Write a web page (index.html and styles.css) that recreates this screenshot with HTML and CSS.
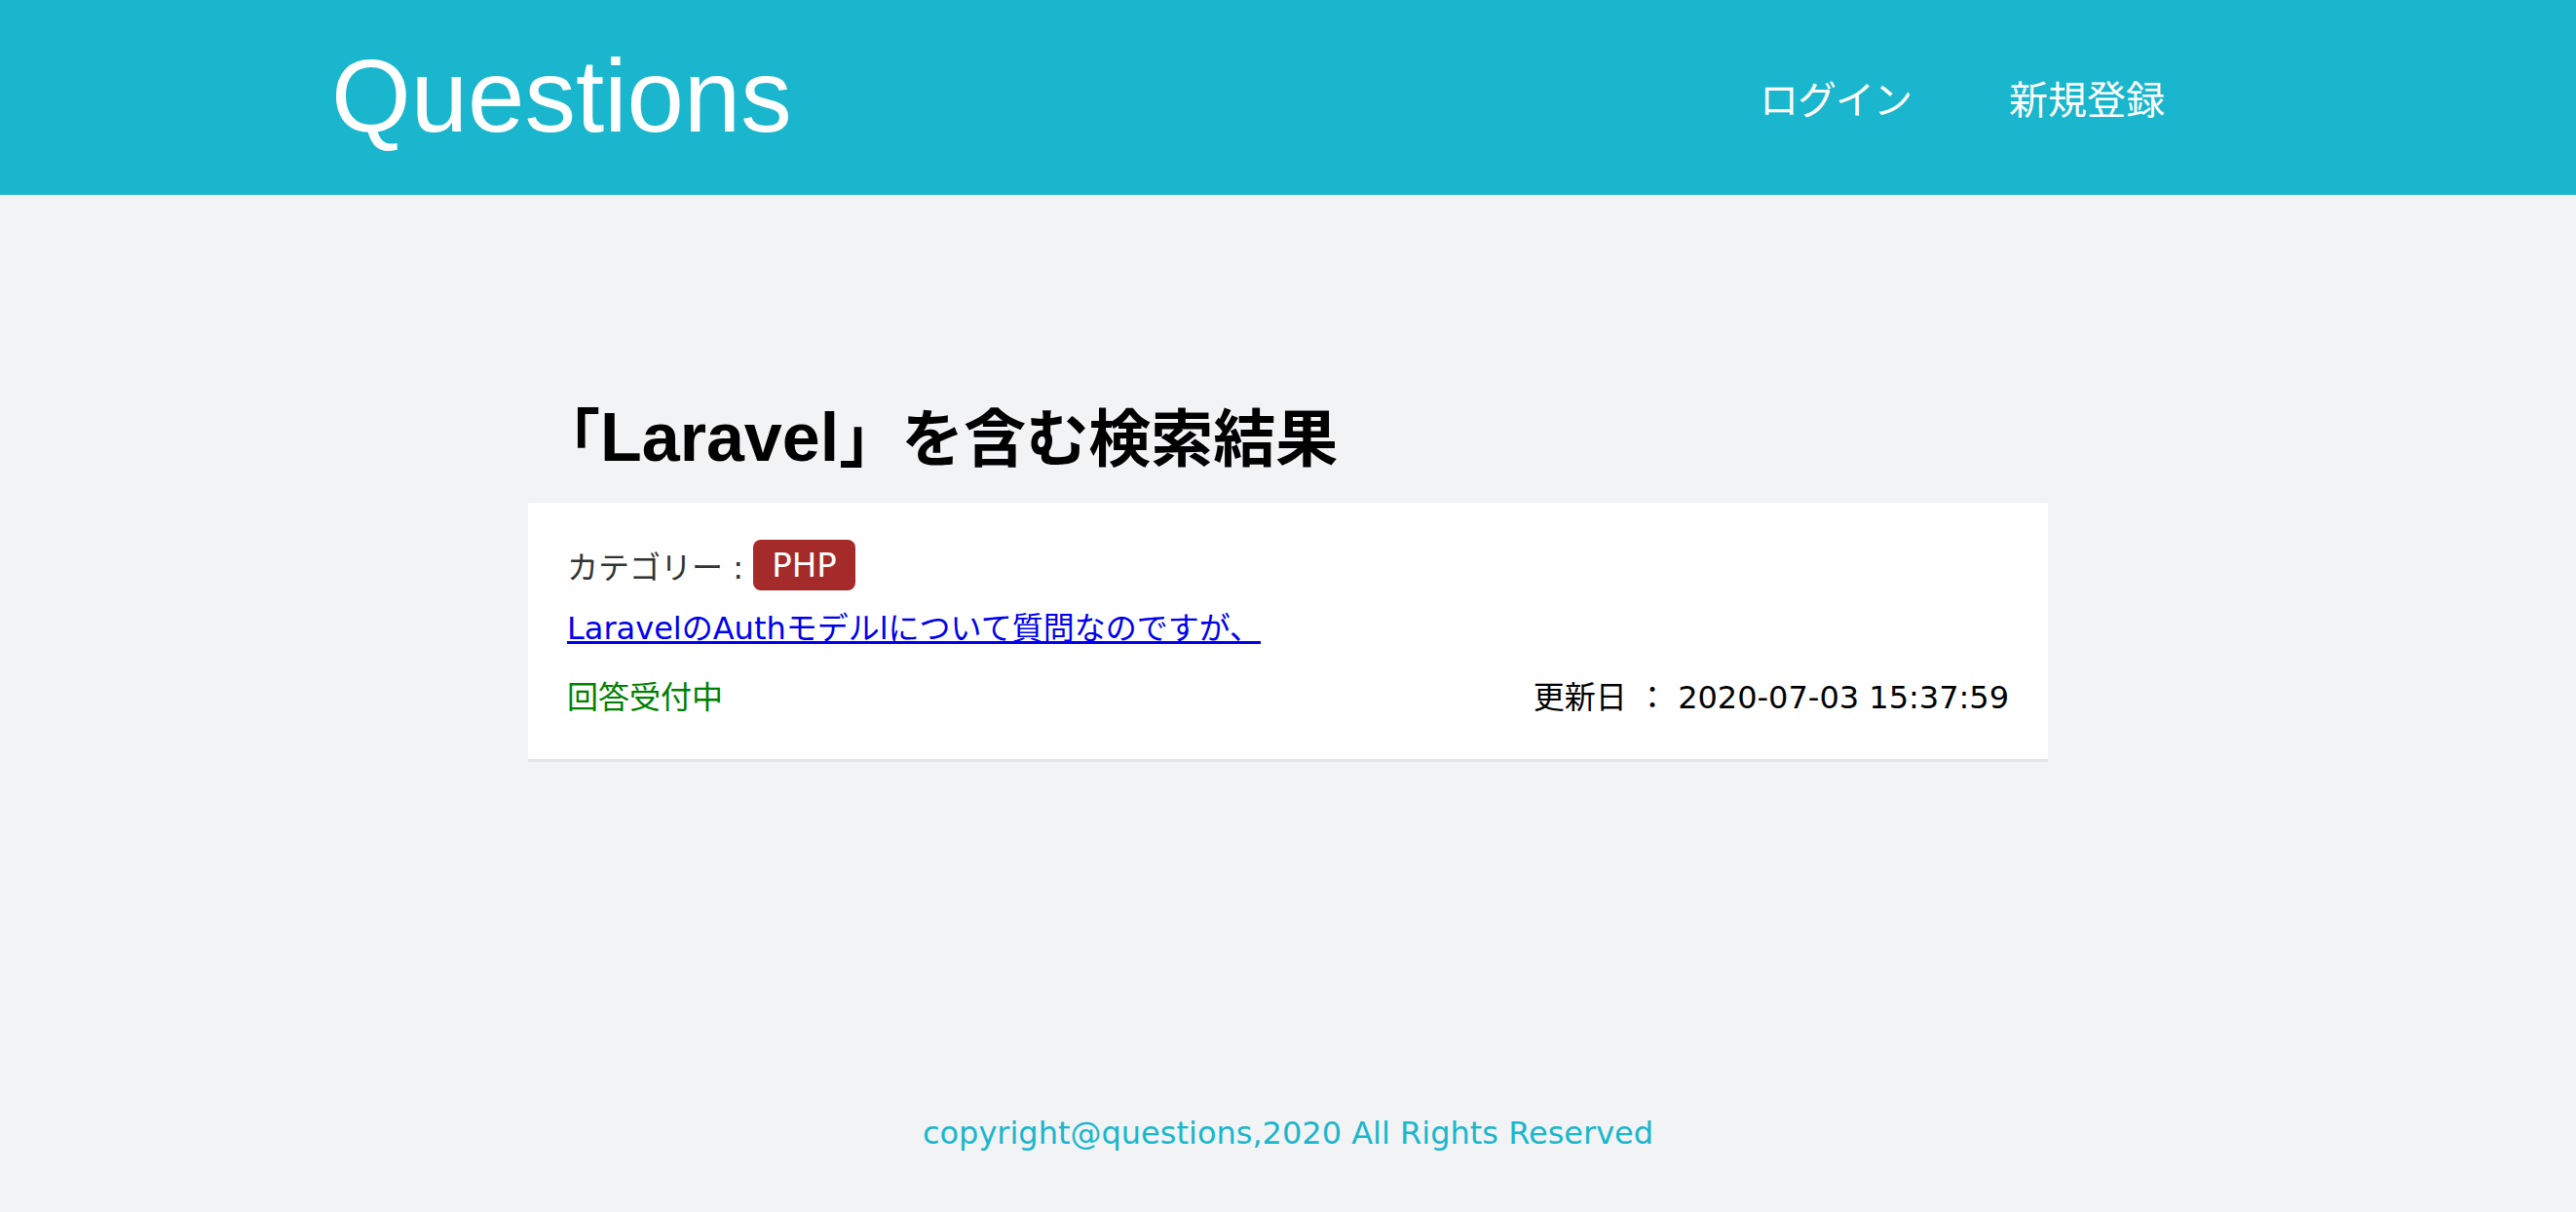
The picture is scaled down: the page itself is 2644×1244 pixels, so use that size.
FILE: index.html
```html
<!DOCTYPE html>
<html lang="ja">
<head>
<meta charset="utf-8">
<title>Questions</title>
<link rel="stylesheet" href="styles.css">
</head>
<body>
<header class="site-header">
  <a class="logo" href="#">Questions</a>
  <nav class="nav">
    <a class="nav-link nav-link-tight" href="#">ログイン</a>
    <a class="nav-link" href="#">新規登録</a>
  </nav>
</header>
<main class="main">
  <h1 class="page-title">「<span class="title-latin">Laravel</span>」を含む検索結果</h1>
  <div class="card">
    <div class="card-category">カテゴリー : <span class="badge">PHP</span></div>
    <div class="card-title"><a class="question-link" href="#">LaravelのAuthモデルlについて質問なのですが、</a></div>
    <div class="card-meta">
      <span class="status">回答受付中</span>
      <span class="updated">更新日 ： 2020-07-03 15:37:59</span>
    </div>
  </div>
</main>
<footer class="site-footer">copyright@questions,2020 All Rights Reserved</footer>
</body>
</html>
```
FILE: styles.css
```css
html, body {
  margin: 0;
  padding: 0;
}
body {
  min-height: 100vh;
  display: flex;
  flex-direction: column;
  background: #f2f3f5;
  font-family: "DejaVu Sans", "Noto Sans CJK JP", sans-serif;
  font-size: 32px;
  color: #000;
}
.site-header {
  height: 200px;
  background: #19b6cd;
  display: flex;
  align-items: center;
  justify-content: space-between;
  padding: 0 422px 0 340px;
}
.logo {
  font-family: "Liberation Sans", "Noto Sans CJK JP", sans-serif;
  font-size: 105px;
  line-height: 1;
  color: #fff;
  text-decoration: none;
  margin-top: -4px;
}
.nav {
  display: flex;
  gap: 100px;
}
.nav-link {
  font-family: "Noto Sans CJK JP", sans-serif;
  font-size: 40px;
  color: #fff;
  text-decoration: none;
}
.nav-link-tight {
  letter-spacing: -1px;
}
.main {
  width: 1560px;
  margin: 0 auto;
}
.page-title {
  margin: 197px 0 23px 10px;
  font-family: "Noto Sans CJK JP", sans-serif;
  font-size: 64px;
  line-height: 96px;
  height: 96px;
  font-weight: 700;
}
.title-latin {
  font-family: "Liberation Sans", sans-serif;
  font-size: 70px;
  line-height: 96px;
}
.card {
  background: #fff;
  padding: 38px 40px 39px;
  box-shadow: 0 3px 0 #e3e4e6;
}
.card-category {
  display: flex;
  align-items: center;
  height: 52px;
  color: #333;
  white-space: pre;
}
.badge {
  display: inline-flex;
  align-items: center;
  height: 52px;
  padding: 0 19px;
  background: #a52a2a;
  color: #fff;
  border-radius: 8px;
  font-size: 34px;
}
.card-title {
  margin-top: 15px;
  line-height: 48px;
}
.question-link {
  color: #0000ee;
}
.card-meta {
  margin-top: 23px;
  display: flex;
  justify-content: space-between;
  line-height: 48px;
}
.status {
  color: #008000;
}
.updated {
  color: #000;
}
.site-footer {
  margin-top: auto;
  padding-bottom: 57px;
  text-align: center;
  line-height: 48px;
  color: #19b6cd;
}
```
